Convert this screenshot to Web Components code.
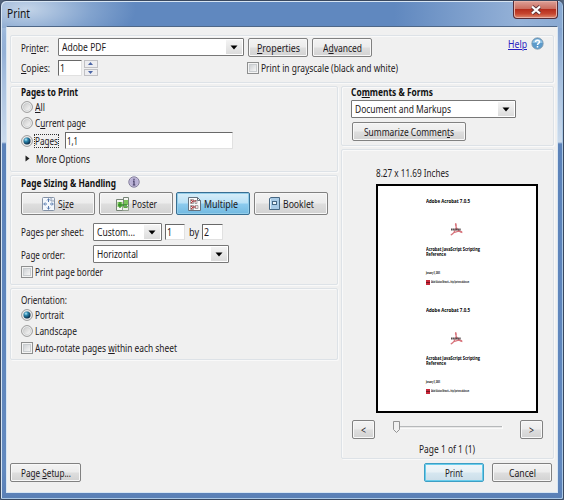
<!DOCTYPE html>
<html lang="en"><head><meta charset="utf-8"><title>Print</title>
<style>html,body{margin:0;width:564px;height:500px;overflow:hidden;background:#53647c}</style></head>
<body><print-dialog></print-dialog>
<script>
const define=(name,html,init)=>customElements.define(name,class extends HTMLElement{
  connectedCallback(){
    if(this.shadowRoot)return;
    const r=this.attachShadow({mode:'open'});
    const w=this.getAttribute('w'),h=this.getAttribute('h'),ml=this.getAttribute('ml'),mt=this.getAttribute('mt');
    if(w)this.style.width=w+'px';
    if(h)this.style.height=h+'px';
    if(ml)this.style.marginLeft=ml+'px';
    if(mt)this.style.marginTop=mt+'px';
    r.innerHTML='<style>:host{box-sizing:border-box;flex:none}*{box-sizing:border-box}</style>'+html;
    if(init)init(this,r);
  }
});
// Text label condensed to fit its width
define('ui-text',`<style>:host{display:block;white-space:nowrap;line-height:14px;height:14px}span{display:inline-block;transform-origin:0 50%}</style><span><slot></slot></span>`,(el,r)=>{
  const w=+el.getAttribute('w'),s=r.querySelector('span');
  if(w){const m=s.getBoundingClientRect().width;s.style.transform='scaleX('+(w/m)+')';}
});
define('ui-row',`<style>:host{display:flex;align-items:flex-start}</style><slot></slot>`);
define('ui-group',`<style>:host{display:flex;flex-direction:column;border:1px solid #dde2e7;border-radius:2px;box-shadow:inset 1px 1px #f9f9f9,1px 1px #f9f9f9;padding-left:10px}</style><slot></slot>`);
define('ui-button',`<style>:host{display:flex;align-items:center;justify-content:center;height:19px;border:1px solid #818181;border-radius:2px;background:linear-gradient(#f3f3f3 0,#ececec 48%,#dedede 52%,#d2d2d2);box-shadow:inset 0 0 0 1px #f8f8f8}
:host([kind=default]){border-color:#3d9fc5;background:linear-gradient(#f0f6f9 0,#e7f1f6 48%,#d6e7f0 52%,#cbdee9);box-shadow:inset 0 0 0 1px #69cdec}
:host([kind=selected]){border-color:#376e92;background:linear-gradient(#d8eef9 0,#b9e1f6 48%,#8ccbee 52%,#72b9e0);box-shadow:inset 0 0 0 1px #93cde9}
</style><slot></slot>`);
define('ui-select',`<style>:host{display:flex;align-items:center;height:18px;border:1px solid #777;border-radius:1px;background:#fff;padding-left:3px}
i{margin-left:auto;width:16px;height:14px;margin-right:1px;background:linear-gradient(#f4f4f4,#dcdcdc);display:flex;align-items:center;justify-content:center}svg{display:block}</style><slot></slot><i><svg width="8" height="5"><path d="M.5 .5h7L4 4.5z" fill="#000"/></svg></i>`);
define('ui-field',`<style>:host{display:flex;align-items:center;height:16px;background:#fff;border:1px solid #e1e1e1;border-top-color:#696969;border-left-color:#696969;padding-left:1px}</style><slot></slot>`);
define('ui-radio',`<style>:host{display:block;width:12px;height:12px}svg{display:block}.d{display:none}:host([on]) .d{display:block}</style>
<svg width="12" height="12"><defs><linearGradient id="g" x1="0" y1="0" x2="1" y2="1"><stop offset="0" stop-color="#c8c8c8"/><stop offset="1" stop-color="#fafafa"/></linearGradient><radialGradient id="b" cx=".35" cy=".3" r=".7"><stop offset="0" stop-color="#b8ebfa"/><stop offset=".4" stop-color="#2b86ad"/><stop offset="1" stop-color="#0b2c49"/></radialGradient></defs><circle cx="6" cy="6" r="5.4" fill="#f6f6f6" stroke="#8c8c8c" stroke-width=".9"/><circle cx="6" cy="6" r="3.8" fill="url(#g)" stroke="#c4c8ca" stroke-width=".6"/><circle class="d" cx="6" cy="6" r="3.5" fill="url(#b)"/></svg>`);
define('ui-check',`<style>:host{display:block;width:12px;height:12px;border:1px solid #8e8f8f;background:#f4f4f4;padding:1px}b{display:block;height:100%;border:1px solid #c9cdd0;background:linear-gradient(135deg,#cfd2d5,#f5f5f5)}</style><b></b>`);
define('ui-spinner',`<style>:host{display:flex;flex-direction:column;gap:1px;width:14px;height:16px}i{flex:1;border:1px solid #c0c0c4;background:#ededf0;display:flex;align-items:center;justify-content:center}svg{display:block}</style><i><svg width="6" height="3"><path d="M0 3h5L2.5 0z" fill="#4a65a5"/></svg></i><i><svg width="6" height="3"><path d="M0 0h5L2.5 3z" fill="#4a65a5"/></svg></i>`);
define('ui-slider',`<style>:host{display:block;width:112px;height:16px}svg{display:block}</style><svg width="112" height="16"><path d="M4 6.5h106" stroke="#b6b8ba"/><path d="M4 7.5h106" stroke="#e8e8e8"/><path d="M110.5 6v3M4 8.5h106" stroke="#fafafa"/><path d="M1.500 1.500h6v8l-3 3-3-3z" fill="#f1f1f1" stroke="#888" stroke-width=".9"/></svg>`);
const icons={
size:`<rect x=".5" y=".5" width="12" height="13" rx="1" fill="#f3f7fc" stroke="#8592a6"/><path d="M9 .5V4h3.5" fill="#dce4ef" stroke="#8592a6" stroke-width=".8"/><path d="M6.5 2v3M6.5 9v3M2 7h3M8 7h3" stroke="#5578ad"/><path d="M5 3.5L6.5 1.5 8 3.500M5 10.500L6.500 12.500 8 10.500M3.500 5.500L1.500 7 3.500 8.500M9.500 5.500L11.500 7 9.500 8.500" fill="none" stroke="#5578ad" stroke-width=".7"/>`,
poster:`<path d="M.5 2.500h7v11h-7z" fill="#f4f6f2" stroke="#778477"/><path d="M7.500 .5h5v9h-5z" fill="#f4f6f2" stroke="#778477"/><path d="M1.500 5h5v5h-5zM8 3h4v5H8z" fill="#7bc35b"/><path d="M4 5v6M2 8h9" stroke="#348f28" stroke-width="1.300"/><path d="M6.500 9.500h6v4h-6z" fill="#edf2ea" stroke="#84917f" stroke-width=".8"/><path d="M7.500 9.500h4v1.500h-4z" fill="#57aa3d"/>`,
multiple:`<path d="M.5 .5h9l3 3v10H.5z" fill="#fafafa" stroke="#65717d"/><path d="M9.500 .5v3h3" fill="none" stroke="#65717d"/><path d="M2.500 2.500h3v4h-3zM7 3.500h2v3H7zM2.500 8.500h3v4h-3zM7 8.500h3v3H7z" fill="#f4e4e4" stroke="#888" stroke-width=".7"/><path d="M3 3l2 1.500L3 6M3 9l2 1.500L3 12M5 4h3M5 10h3" fill="none" stroke="#a5292c"/>`,
booklet:`<path d="M1.500 1.500L3 .5h8.500v12h-10z" fill="#a9cbe6" stroke="#466783"/><path d="M2.500 2v10" stroke="#dcecf8"/><rect x="4.500" y="4.500" width="4" height="3" fill="#edf5fb" stroke="#466783"/>`,
help:`<circle cx="6.500" cy="6.500" r="5.700" fill="#5d9bcb" stroke="#8298aa" stroke-width=".8"/><path d="M1.500 6a5 4 0 0 1 10 0z" fill="#8fc1e4"/><path d="M4.500 5c0-2.500 4-2.400 4-.1 0 1.500-2 1.300-2 3M6.500 9v1.400" fill="none" stroke="#fff" stroke-width="1.500"/>`,
info:`<circle cx="6" cy="6" r="5.200" fill="#c9c3de" stroke="#837d9c"/><circle cx="6" cy="6" r="3.900" fill="#b9b1d5"/><path d="M6 2.800v1.300M5 5.200h1V9M4.800 9h2.500" fill="none" stroke="#494168" stroke-width="1.200"/>`,
tri:`<path d="M.5 .5L4.500 3.500.5 6.500z" fill="#222"/>`};
define('ui-icon',`<style>:host{display:block}svg{display:block;overflow:visible}</style><svg width="13" height="14"></svg>`,(el,r)=>{r.querySelector('svg').innerHTML=icons[el.getAttribute('name')]});
define('doc-page',`<style>:host{display:block;height:109px;padding:11px 0 0 48px;color:#000;font-family:"Open Sans",sans-serif}
ui-text{font-weight:700}.t{font-size:5.5px;height:9px;line-height:9px}.s{font-size:4.8px;height:5px;line-height:5px}.m{font-size:2.5px;height:4px;line-height:4px}svg{display:block;margin:17px 0 11px 24px}ui-row{display:flex}</style>
<ui-text class="t" w="44">Adobe Acrobat 7.0.5</ui-text>
<svg width="13" height="13"><path d="M.8 12.200C4 11 7.500 4 5.800 .6 4.500 1 7 8.500 11.800 9.500 12.500 7 4 8 .8 12.200" fill="none" stroke="#d8747c" stroke-width="1.100"/><path d="M1 6.500h10" stroke="#554b4d" stroke-width="1.800" stroke-dasharray="1.300 .35"/></svg>
<ui-text class="s" w="54">Acrobat JavaScript Scripting</ui-text><ui-text class="s" w="20">Reference</ui-text>
<ui-text class="m" w="14" mt="14">January 5, 2005</ui-text>
<ui-row mt="5"><svg width="4" height="5" style="margin:0"><path d="M0 0h4v5H0z" fill="#c82839"/><path d="M0 2.500h4" stroke="#5e101c" stroke-width=".8"/></svg><ui-text class="m" w="38" ml="1">Adobe Solutions Network — http://partners.adobe.com</ui-text></ui-row>`);
define('print-dialog',`<style>
:host{display:flex;flex-direction:column;width:564px;height:500px;font:10.2px "Noto Sans","Open Sans",sans-serif;color:#1d1921;border:1px solid #3a4960;border-radius:6px 6px 2px 2px;
background:radial-gradient(ellipse 110px 45px at 25px 8px,#cbdaebee,#b4cbe566 60%,transparent),linear-gradient(90deg,transparent 70%,#94b1d7 92%,#89a9d2) 0 0/100% 27px no-repeat,linear-gradient(#83a3cf 0,#a9c1df 55px,#cadaec 114px,#5b82b9 116px,#6289bf 440px,#5377ae) 0 27px no-repeat,#6088bf;box-shadow:inset 1px 1px #d7e5f3,inset -1px -1px #a9c7e5}
header{height:25px;display:flex;justify-content:space-between;padding:0 5px 0 6px}
header ui-text{font-size:12px;margin-top:6px;color:#111}
.x{width:45px;height:18px;border:1px solid #552c37;border-top:0;border-radius:0 0 4px 4px;background:linear-gradient(#dda198,#cb6e60 45%,#b52e1d 50%,#c6452f 75%,#df8b6f);box-shadow:inset 0 0 0 1px #e7b0a6;display:flex;align-items:center;justify-content:center}
main{margin:0 5px 6px 5px;flex:1;min-height:0;background:#f0f0f0;border:1px solid #d8e6f3;border-top-color:#4e6788;padding:8px 0 0 3px;display:flex;flex-direction:column}
.cols{display:grid;grid-template-columns:328px 213px;column-gap:3px;margin-top:3px}.col{display:flex;flex-direction:column;gap:3px}
.b{font-weight:700;color:#111}u{text-underline-offset:1px;text-decoration-thickness:1px}
.f{outline:1px dotted #333;outline-offset:0}
.paper{width:162px;height:229px;border:2px solid #000;background:#fff;overflow:hidden;margin:4px 0 0 24px}
.link{color:#2a1fc0}
</style>
<header><ui-text w="23">Print</ui-text><div class="x"><svg width="12" height="10"><path d="M2 1.500l8 7M10 1.500l-8 7" stroke="#5e3438" stroke-width="3.800"/><path d="M2 1.500l8 7M10 1.500l-8 7" stroke="#fff" stroke-width="2.300"/></svg></div></header>
<main>
<ui-group w="544" h="48">
 <ui-row h="19" mt="2"><ui-text w="28" mt="3">Pri<u>n</u>ter:</ui-text><ui-select w="186" ml="9"><ui-text w="44">Adobe PDF</ui-text></ui-select><ui-button w="60" ml="4"><ui-text w="43"><u>P</u>roperties</ui-text></ui-button><ui-button w="60" ml="4"><ui-text w="39">A<u>d</u>vanced</ui-text></ui-button><ui-text w="19" ml="136" mt="-1" class="link"><u>Help</u></ui-text><ui-icon name="help" ml="4" mt="-1"></ui-icon></ui-row>
 <ui-row h="17" mt="3"><ui-text w="29" mt="1"><u>C</u>opies:</ui-text><ui-field w="24" ml="8"><ui-text w="5">1</ui-text></ui-field><ui-spinner ml="2"></ui-spinner><ui-check ml="149" mt="2"></ui-check><ui-text w="137" ml="2" mt="1">Print in gra<u>y</u>scale (black and white)</ui-text></ui-row>
</ui-group>
<div class="cols"><div class="col">
<ui-group h="86">
 <ui-text w="57" mt="-2" class="b">Pages to Print</ui-text>
 <ui-row mt="1"><ui-radio mt="1"></ui-radio><ui-text w="10" ml="2"><u>A</u>ll</ui-text></ui-row>
 <ui-row mt="2"><ui-radio mt="1"></ui-radio><ui-text w="51" ml="2">C<u>u</u>rrent page</ui-text></ui-row>
 <ui-row mt="2"><ui-radio on mt="3"></ui-radio><ui-text class="f" w="23" ml="2" mt="3" h="12" style="line-height:12px">Pages</ui-text><ui-field w="168" h="17" ml="7"><ui-text w="11">1,1</ui-text></ui-field></ui-row>
 <ui-row mt="3"><ui-icon name="tri" ml="4" mt="3" style="width:6px"></ui-icon><ui-text w="54" ml="5">More Options</ui-text></ui-row>
</ui-group>
<ui-group h="110">
 <ui-row><ui-text w="95" mt="0" class="b">Page Sizing &amp; Handling</ui-text><ui-icon name="info" ml="12" mt="0"></ui-icon></ui-row>
 <ui-row mt="2"><ui-button w="74" h="23"><ui-icon name="size" style="margin-right:3px"></ui-icon><ui-text w="16">S<u>i</u>ze</ui-text></ui-button><ui-button w="74" h="23" ml="4"><ui-icon name="poster" style="margin-right:3px"></ui-icon><ui-text w="25">Poster</ui-text></ui-button><ui-button kind="selected" w="74" h="23" ml="3"><ui-icon name="multiple" style="margin-right:3px"></ui-icon><ui-text w="34">Multiple</ui-text></ui-button><ui-button w="74" h="23" ml="4"><ui-icon name="booklet" style="margin-right:2px"></ui-icon><ui-text w="31">Booklet</ui-text></ui-button></ui-row>
 <ui-row h="19" mt="8"><ui-text w="63" mt="2">Pages per sheet:</ui-text><ui-select w="69" ml="9"><ui-text w="38">Custom...</ui-text></ui-select><ui-field w="20" ml="3" mt="1"><ui-text w="5">1</ui-text></ui-field><ui-text w="10" ml="4" mt="2">by</ui-text><ui-field w="21" ml="3" mt="1"><ui-text w="5">2</ui-text></ui-field></ui-row>
 <ui-row h="18" mt="3"><ui-text w="44" mt="3">Page order:</ui-text><ui-select w="136" ml="28"><ui-text w="41">Horizontal</ui-text></ui-select></ui-row>
 <ui-row mt="3"><ui-check></ui-check><ui-text w="68" ml="2" mt="-1">Print page border</ui-text></ui-row>
</ui-group>
<ui-group h="72">
 <ui-text w="46" mt="4">Orientation:</ui-text>
 <ui-row mt="1"><ui-radio on mt="1"></ui-radio><ui-text w="29" ml="2">Portrait</ui-text></ui-row>
 <ui-row mt="2"><ui-radio mt="1"></ui-radio><ui-text w="42" ml="2">Landscape</ui-text></ui-row>
 <ui-row mt="3"><ui-check mt="1"></ui-check><ui-text w="142" ml="2">Auto-rotate pages <u>w</u>ithin each sheet</ui-text></ui-row>
</ui-group>
</div><div class="col">
<ui-group h="60" style="padding-left:9px">
 <ui-text w="82" mt="-2" class="b">Co<u>m</u>ments &amp; Forms</ui-text>
 <ui-select w="165" mt="1"><ui-text w="96">Document and Markups</ui-text></ui-select>
 <ui-button w="114" mt="4" ml="1"><ui-text w="90">Summarize Commen<u>t</u>s</ui-text></ui-button>
</ui-group>
<ui-group h="310">
 <ui-text w="73" mt="16" ml="24">8.27 x 11.69 Inches</ui-text>
 <div class="paper"><doc-page></doc-page><doc-page></doc-page></div>
 <ui-row mt="7"><ui-button w="23"><ui-text w="5">&lt;</ui-text></ui-button><ui-slider ml="17"></ui-slider><ui-button w="23" ml="16"><ui-text w="5">&gt;</ui-text></ui-button></ui-row>
 <ui-text w="56" mt="3" ml="67">Page 1 of 1 (1)</ui-text>
</ui-group>
</div></div>
<ui-row mt="4"><ui-button w="71"><ui-text w="50">Page <u>S</u>etup...</ui-text></ui-button><ui-button kind="default" w="60" ml="343"><ui-text w="18">Print</ui-text></ui-button><ui-button w="60" ml="8"><ui-text w="27">Cancel</ui-text></ui-button></ui-row>
</main>`);
</script></body></html>
